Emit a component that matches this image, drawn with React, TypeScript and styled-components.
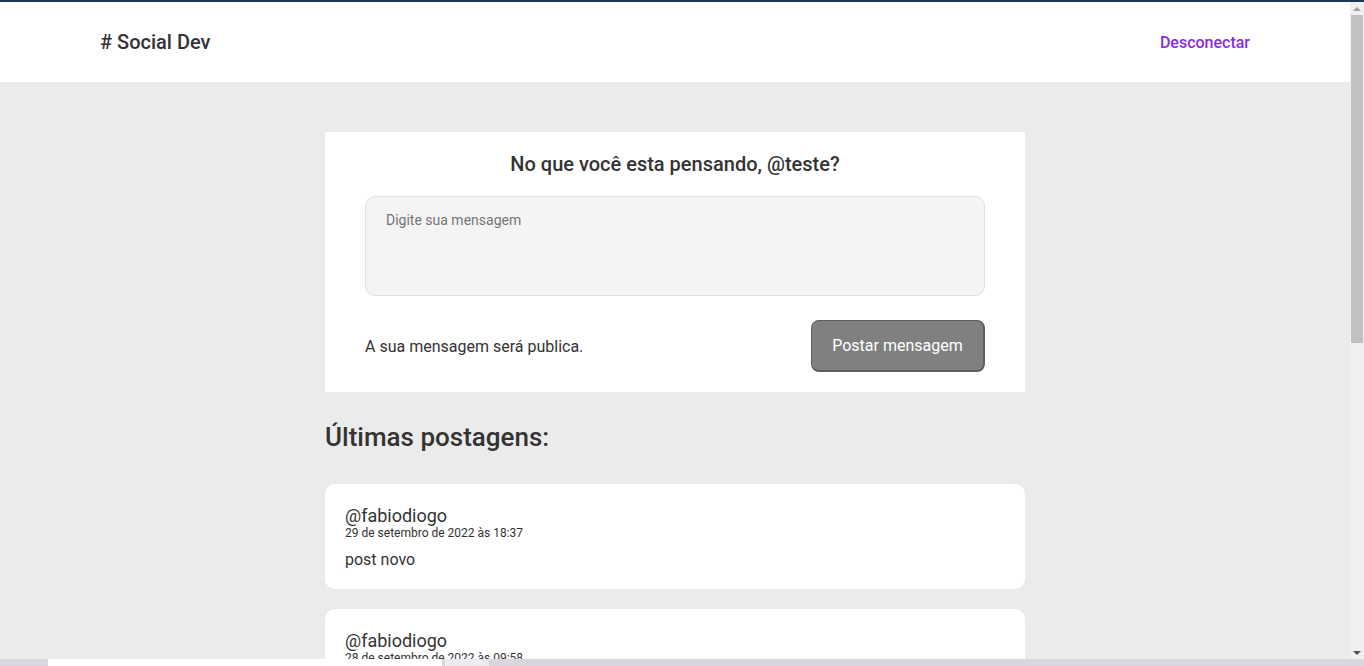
import styled, { createGlobalStyle } from 'styled-components';

const GlobalStyle = createGlobalStyle`
  * {
    box-sizing: border-box;
  }
  html, body {
    scrollbar-width: none;
  }
  body {
    margin: 0;
    background-color: #ebebeb;
    font-family: Roboto, 'Liberation Sans', Arial, sans-serif;
    color: #333333;
  }
  #root {
    margin-right: 14px;
  }
`;

const TopLine = styled.div`
  position: fixed;
  top: 0;
  left: 0;
  right: 0;
  height: 2px;
  background-color: #1f3658;
  z-index: 3;
`;

const Header = styled.header`
  height: 82px;
  padding: 2px 100px 0;
  background-color: #ffffff;
  display: flex;
  align-items: center;
  justify-content: space-between;

  h1 {
    margin: 0;
    font-size: 20px;
    font-weight: 500;
    color: #333333;
  }
`;

const LogoutLink = styled.a`
  font-size: 16px;
  font-weight: 500;
  color: #8a2be2;
  text-decoration: none;
  cursor: pointer;
`;

const Main = styled.main`
  width: 700px;
  margin: 50px auto 0;
  padding-bottom: 80px;
`;

const NewPostCard = styled.section`
  background-color: #ffffff;
  padding: 20px 40px;
  display: flex;
  flex-direction: column;

  h2 {
    margin: 0;
    font-size: 20px;
    line-height: 24px;
    font-weight: 500;
    text-align: center;
    color: #333333;
  }
`;

const MessageInput = styled.textarea`
  margin-top: 20px;
  height: 100px;
  resize: none;
  border: 1px solid #e0e0e0;
  border-radius: 10px;
  background-color: #f4f4f4;
  padding: 15px 20px;
  font-family: inherit;
  font-size: 14px;
  color: #333333;
  outline: none;

  &::placeholder {
    color: #757575;
  }
`;

const FormFooter = styled.div`
  margin-top: 24px;
  display: flex;
  align-items: center;
  justify-content: space-between;

  span {
    font-size: 16px;
    color: #333333;
  }
`;

const PostButton = styled.button`
  width: 174px;
  height: 52px;
  border-radius: 8px;
  border: 1px solid #5e5e5e;
  border-bottom-width: 2px;
  border-right-width: 2px;
  background-color: #808080;
  color: #ffffff;
  font-family: inherit;
  font-size: 16px;
  cursor: pointer;
`;

const SectionTitle = styled.h2`
  margin: 30px 0 32px;
  font-size: 26px;
  line-height: 30px;
  font-weight: 500;
  color: #333333;
`;

const PostList = styled.div`
  display: flex;
  flex-direction: column;
  gap: 20px;
`;

const PostCard = styled.article`
  background-color: #ffffff;
  border-radius: 10px;
  padding: 21px 20px 20px;
  display: flex;
  flex-direction: column;
`;

const Author = styled.span`
  font-size: 18px;
  line-height: 21px;
  color: #333333;
`;

const PostDate = styled.span`
  font-size: 12px;
  line-height: 14px;
  color: #333333;
`;

const PostBody = styled.p`
  margin: 10px 0 0;
  font-size: 16px;
  line-height: 19px;
  color: #333333;
`;

const Scrollbar = styled.div`
  position: fixed;
  top: 2px;
  right: 0;
  bottom: 0;
  width: 14px;
  background-color: #f0f0f0;
  display: flex;
  flex-direction: column;
  align-items: center;
  z-index: 2;
`;

const Arrow = styled.div<{ $down?: boolean }>`
  height: 13px;
  display: flex;
  align-items: center;
  justify-content: center;

  &::after {
    content: '';
    border-left: 4px solid transparent;
    border-right: 4px solid transparent;
    ${(p) =>
      p.$down
        ? 'border-top: 4px solid #505050;'
        : 'border-bottom: 4px solid #a3a3a3;'}
  }
`;

const Thumb = styled.div`
  width: 12px;
  height: 328px;
  background-color: #c1c1c1;
`;

const Track = styled.div`
  flex: 1;
`;

const Taskbar = styled.div`
  position: fixed;
  left: 0;
  right: 0;
  bottom: 0;
  height: 7px;
  background-color: #d9d6dd;
  display: flex;
  padding-left: 48px;
  gap: 3px;
  z-index: 4;
`;

const TaskSlot = styled.div<{ $w: number; $bg: string }>`
  width: ${(p) => p.$w}px;
  background-color: ${(p) => p.$bg};
`;

const posts = [
  { id: 1, author: '@fabiodiogo', date: '29 de setembro de 2022 às 18:37', text: 'post novo' },
  { id: 2, author: '@fabiodiogo', date: '28 de setembro de 2022 às 09:58', text: 'teste de postagem' },
  { id: 3, author: '@teste', date: '27 de setembro de 2022 às 21:14', text: 'olá pessoal!' },
  { id: 4, author: '@fabiodiogo', date: '27 de setembro de 2022 às 15:02', text: 'primeiro post' },
  { id: 5, author: '@teste', date: '26 de setembro de 2022 às 11:45', text: 'bom dia' },
  { id: 6, author: '@fabiodiogo', date: '25 de setembro de 2022 às 08:30', text: 'hello world' },
];

const App = () => (
  <>
    <GlobalStyle />
    <TopLine />
    <Header>
      <h1># Social Dev</h1>
      <LogoutLink>Desconectar</LogoutLink>
    </Header>
    <Main>
      <NewPostCard>
        <h2>No que você esta pensando, @teste?</h2>
        <MessageInput placeholder="Digite sua mensagem" />
        <FormFooter>
          <span>A sua mensagem será publica.</span>
          <PostButton type="button">Postar mensagem</PostButton>
        </FormFooter>
      </NewPostCard>
      <SectionTitle>Últimas postagens:</SectionTitle>
      <PostList>
        {posts.map((post) => (
          <PostCard key={post.id}>
            <Author>{post.author}</Author>
            <PostDate>{post.date}</PostDate>
            <PostBody>{post.text}</PostBody>
          </PostCard>
        ))}
      </PostList>
    </Main>
    <Scrollbar>
      <Arrow />
      <Thumb />
      <Track />
      <Arrow $down />
      <div style={{ height: 7 }} />
    </Scrollbar>
    <Taskbar>
      <TaskSlot $w={394} $bg="#ffffff" />
      <TaskSlot $w={44} $bg="#ecebef" />
    </Taskbar>
  </>
);

export default App;
